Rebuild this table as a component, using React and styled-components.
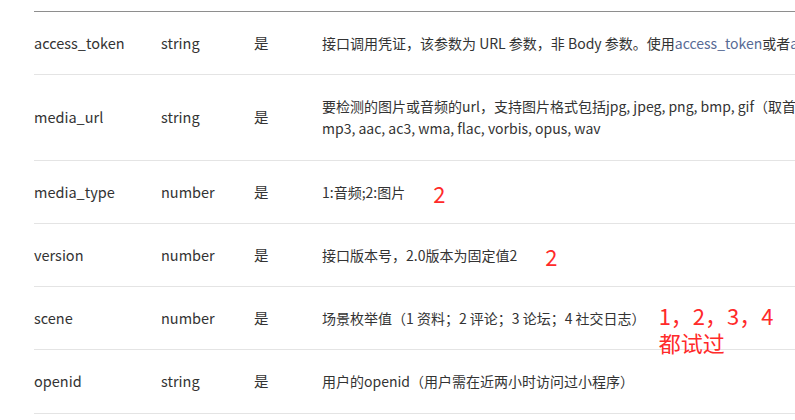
import React from "react";
import styled, { createGlobalStyle } from "styled-components";

const GlobalStyle = createGlobalStyle`
  html, body {
    margin: 0;
    padding: 0;
    background: #fff;
    overflow: hidden;
  }
  body {
    font-family: "Noto Sans CJK SC", "Noto Sans", sans-serif;
    color: #333;
  }
`;

const Page = styled.div`
  width: 795px;
  height: 420px;
  overflow: hidden;
  padding: 11px 0 0 34px;
  box-sizing: border-box;
`;

const Table = styled.div`
  width: 960px;
  border-top: 1px solid #8e8e8e;
`;

const Row = styled.div`
  display: grid;
  grid-template-columns: 127px 93px 68px 650px;
  align-items: center;
  border-bottom: 1px solid #e4e4e4;
  padding: 20px 0 20.3px;
`;

const Cell = styled.div`
  font-size: 14.5px;
  line-height: 22px;
  white-space: nowrap;
`;

const Desc = styled.div`
  font-size: 14px;
  line-height: 22px;
`;

const Text = styled.span`
  position: relative;
  display: inline-block;
`;

const Link = styled.span`
  color: #576b95;
`;

const Note = styled.span`
  position: absolute;
  left: calc(100% + ${({ $gap }) => $gap}px);
  top: ${({ $top }) => $top}px;
  color: #ff2a2a;
  font-size: 22px;
  line-height: 27px;
  white-space: nowrap;
`;

const rows = [
  {
    name: "access_token",
    type: "string",
    desc: (
      <span style={{ whiteSpace: "nowrap" }}>
        接口调用凭证，该参数为 URL 参数，非 Body 参数。使用
        <Link>access_token</Link>或者<Link>authorizer_access_token</Link>
      </span>
    ),
  },
  {
    name: "media_url",
    type: "string",
    desc: (
      <>
        要检测的图片或音频的url，支持图片格式包括jpg, jpeg, png, bmp, gif（取首帧），支持的音频格式包括
        <br />
        mp3, aac, ac3, wma, flac, vorbis, opus, wav
      </>
    ),
  },
  {
    name: "media_type",
    type: "number",
    desc: (
      <Text>
        1:音频;2:图片
        <Note $gap={28} $top={-1}>2</Note>
      </Text>
    ),
  },
  {
    name: "version",
    type: "number",
    desc: (
      <Text>
        接口版本号，2.0版本为固定值2
        <Note $gap={28} $top={-1}>2</Note>
      </Text>
    ),
  },
  {
    name: "scene",
    type: "number",
    desc: (
      <Text>
        场景枚举值（1 资料；2 评论；3 论坛；4 社交日志）
        <Note $gap={13} $top={-5}>
          1，2，3，4
          <br />
          都试过
        </Note>
      </Text>
    ),
  },
  {
    name: "openid",
    type: "string",
    desc: "用户的openid（用户需在近两小时访问过小程序）",
  },
];

export default function App() {
  return (
    <>
      <GlobalStyle />
      <Page>
        <Table>
          {rows.map((r) => (
            <Row key={r.name}>
              <Cell>{r.name}</Cell>
              <Cell>{r.type}</Cell>
              <Cell>是</Cell>
              <Desc>{r.desc}</Desc>
            </Row>
          ))}
        </Table>
      </Page>
    </>
  );
}
